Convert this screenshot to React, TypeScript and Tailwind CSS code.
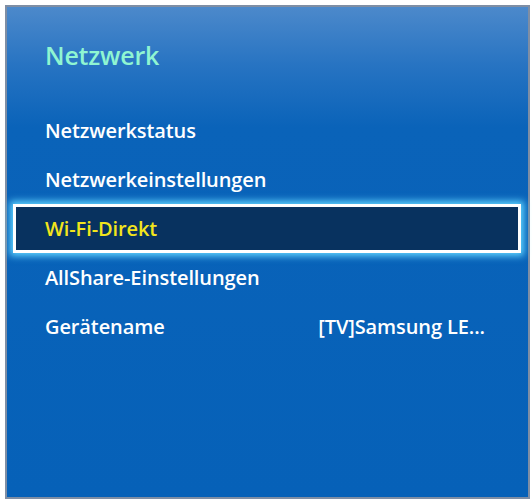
const ITEMS = [
  { label: 'Netzwerkstatus' },
  { label: 'Netzwerkeinstellungen' },
  { label: 'Wi-Fi-Direkt', selected: true },
  { label: 'AllShare-Einstellungen' },
  { label: 'Gerätename', value: '[TV]Samsung LE...' },
]

export default function App() {
  return (
    <div className="w-[532px] h-[500px] bg-white pl-[5px] pt-[5px] font-['Open_Sans','Noto_Sans',sans-serif]">
      <div className="w-[525px] h-[494px] border-2 border-[#7f8ea4] bg-[#0661b8] bg-[linear-gradient(to_bottom,#4c89cb_0px,#2673c2_60px,#0a63b9_120px,#0661b8_100%)] flex flex-col">
        {/* title */}
        <div className="h-[99px] pl-[38px] pt-[36px] text-[25px] font-semibold text-[#8ff5d2] leading-none tracking-[-0.2px]">
          Netzwerk
        </div>

        {/* menu */}
        <div className="flex flex-col pl-[6px] pr-[7px]">
          {ITEMS.map((item) => (
            <div
              key={item.label}
              className={
                item.selected
                  ? 'h-[49px] flex items-center justify-between pl-[29px] pr-[33px] bg-[#08325f] border-[3px] border-white shadow-[0_0_7px_3px_#5fd4ff] text-[#f2e51c]'
                  : 'h-[49px] flex items-center justify-between pl-[32px] pr-[36px] text-white'
              }
            >
              <span className="text-[20px] font-semibold tracking-[-0.1px]">{item.label}</span>
              {item.value && <span className="text-[20px] font-semibold tracking-[-0.1px]">{item.value}</span>}
            </div>
          ))}
        </div>
      </div>
    </div>
  )
}
